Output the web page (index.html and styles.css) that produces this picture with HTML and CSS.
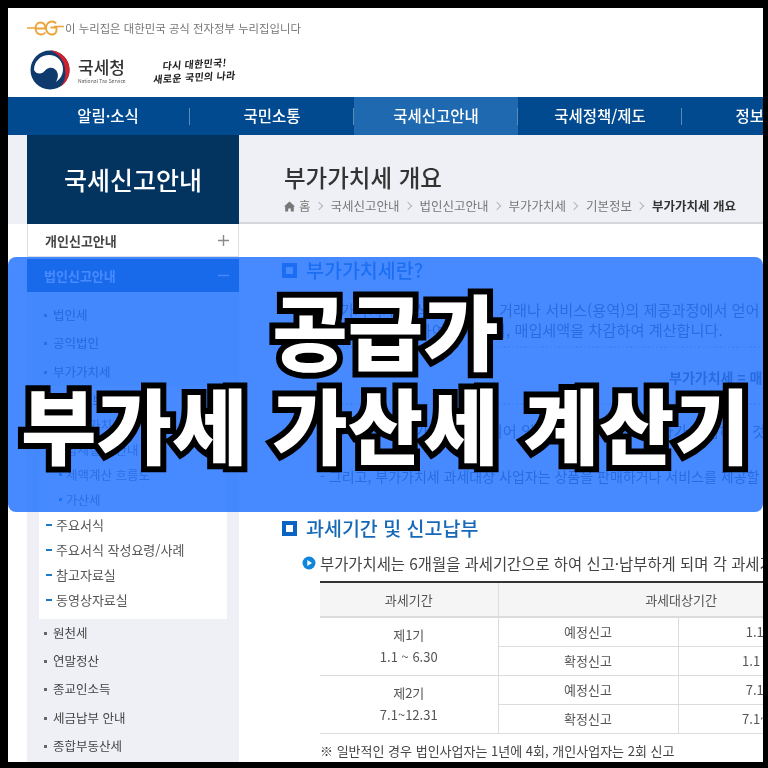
FILE: index.html
```html
<!DOCTYPE html>
<html lang="ko">

<head>
    <meta charset="UTF-8">
    <meta name="viewport" content="width=device-width, initial-scale=1.0">
    <title>공급가 부가세 가산세 계산기</title>
    <link rel="stylesheet" href="styles.css">
</head>

<body>
    <div class="page">
        <header class="site-header">
            <div class="gov-notice">
                <svg class="eg-mark" width="37" height="16" viewBox="0 0 37 16">
                    <path d="M0 8h10M27 6.500h10" stroke="#eba53c" stroke-width="1.600" fill="none" />
                    <path d="M9 8.500h9.500C18.500 5 16.500 2.500 13.500 2.500S8.500 5 8.500 8.500s2.500 6 5.500 6c2 0 3.500-.8 4.500-2" stroke="#eba53c" stroke-width="1.900" fill="none" />
                    <path d="M29 3.500C28 2 26.500 1.500 25 1.500c-3.500 0-6 3-6 6.500s2.500 6.500 6 6.500c2.500 0 4-1.500 4.500-4V7.500h-6" stroke="#eba53c" stroke-width="1.900" fill="none" />
                </svg>
                <span>이 누리집은 대한민국 공식 전자정부 누리집입니다</span>
            </div>
            <div class="brand">
                <svg class="nts-logo" width="40" height="40" viewBox="0 0 40 40">
                    <circle cx="20" cy="20" r="19.500" fill="#0f3a6d" />
                    <path d="M20 .5A19.500 19.500 0 0 1 30 36.800 19 19 0 0 0 35 20C35 10 27 2.500 20 .5Z" fill="#d2202f" />
                    <path d="M4 20C4 11 11 5 19 5c8 0 14 6 14 14 0 6-3 10-7 13 1.500-3 2.500-6 1.500-9-1-4-5-6-8.500-5-3 .8-4 3-6 4.500C10 24 6 24 4 20Z" fill="#fff" />
                </svg>
                <div class="brand-name">
                    <strong>국세청</strong>
                    <small>National Tax Service</small>
                </div>
                <div class="slogan">
                    <span>다시 대한민국!</span>
                    <span>새로운 국민의 나라</span>
                </div>
            </div>
        </header>

        <nav class="main-nav">
            <a class="nav-item">알림·소식</a>
            <a class="nav-item">국민소통</a>
            <a class="nav-item active">국세신고안내</a>
            <a class="nav-item">국세정책/제도</a>
            <a class="nav-item">정보공개</a>
        </nav>

        <div class="main">
            <aside class="sidebar">
                <h2 class="side-title">국세신고안내</h2>
                <div class="side-group">개인신고안내
                    <svg width="11" height="11" viewBox="0 0 11 11"><path d="M5.500 0v11M0 5.500h11" stroke="#8a8a8a" stroke-width="1.400" /></svg>
                </div>
                <div class="side-group open">법인신고안내
                    <svg width="11" height="11" viewBox="0 0 11 11"><path d="M0 5.500h11" stroke="#fff" stroke-width="1.400" /></svg>
                </div>
                <ul class="side-list first">
                    <li>법인세</li>
                    <li>공익법인</li>
                    <li>부가가치세</li>
                </ul>
                <div class="side-sub">
                    <div class="sub-line">기본정보</div>
                    <div class="sub-line deep">부가가치세</div>
                    <div class="sub-line deep">납세절차 안내</div>
                    <div class="sub-line deep">세액계산 흐름도</div>
                    <div class="sub-line deep">가산세</div>
                    <div class="sub-line">주요서식</div>
                    <div class="sub-line">주요서식 작성요령/사례</div>
                    <div class="sub-line">참고자료실</div>
                    <div class="sub-line">동영상자료실</div>
                </div>
                <ul class="side-list">
                    <li>원천세</li>
                    <li>연말정산</li>
                    <li>종교인소득</li>
                    <li>세금납부 안내</li>
                    <li>종합부동산세</li>
                </ul>
            </aside>

            <main class="content">
                <div class="content-head">
                    <h1>부가가치세 개요</h1>
                    <div class="crumbs">
                        <svg width="11" height="11" viewBox="0 0 11 11"><path d="M5.500 .5 11 5.500 9.800 5.500V10.500H6.800V7.500H4.200V10.500H1.200V5.500H0Z" fill="#777" /></svg>
                        <span>홈</span><i></i>
                        <span>국세신고안내</span><i></i>
                        <span>법인신고안내</span><i></i>
                        <span>부가가치세</span><i></i>
                        <span>기본정보</span><i></i>
                        <b>부가가치세 개요</b>
                    </div>
                </div>

                <div class="content-body">
                    <h3 class="sec-title first">부가가치세란?</h3>
                    <p class="lead">- 부가가치세는 상품(재화)의 거래나 서비스(용역)의 제공과정에서 얻어<br>&nbsp;&nbsp;지는 이윤에 대하여 과세하며, 매입세액을 차감하여 계산합니다.</p>
                    <div class="hatch"></div>
                    <div class="formula">부가가치세 = 매출세액 - 매입세액</div>
                    <div class="hatch"></div>
                    <p class="lead note-a">- 부가가치세는 가격에 포함되어 있기 때문에 실제 소비자가 부담하는 것</p>
                    <p class="lead note-b">- 그리고, 부가가치세 과세대상 사업자는 상품을 판매하거나 서비스를 제공할 때</p>

                    <h3 class="sec-title second">과세기간 및 신고납부</h3>
                    <p class="bullet"><svg width="14" height="14" viewBox="0 0 14 14"><circle cx="7" cy="7" r="6.500" fill="#0f86dc" /><path d="M5.300 4v6L10 7Z" fill="#fff" /></svg>부가가치세는 6개월을 과세기간으로 하여 신고·납부하게 되며 각 과세기간을 다시</p>

                    <table class="tax-table">
                        <colgroup>
                            <col class="col-a">
                            <col class="col-b">
                            <col class="col-c">
                        </colgroup>
                        <thead>
                            <tr>
                                <th>과세기간</th>
                                <th colspan="2">과세대상기간</th>
                            </tr>
                        </thead>
                        <tbody>
                            <tr>
                                <td rowspan="2">제1기<br>1.1 ~ 6.30</td>
                                <td>예정신고</td>
                                <td>1.1~3.31</td>
                            </tr>
                            <tr>
                                <td>확정신고</td>
                                <td>1.1 ~ 6.30</td>
                            </tr>
                            <tr>
                                <td rowspan="2">제2기<br>7.1~12.31</td>
                                <td>예정신고</td>
                                <td>7.1~9.30</td>
                            </tr>
                            <tr>
                                <td>확정신고</td>
                                <td>7.1~12.31</td>
                            </tr>
                        </tbody>
                    </table>
                    <p class="table-note">※ 일반적인 경우 법인사업자는 1년에 4회, 개인사업자는 2회 신고</p>
                </div>
            </main>
        </div>

        <div class="banner">
            <div class="banner-title">공급가<br>부가세 가산세 계산기</div>
        </div>
    </div>
</body>

</html>
```

FILE: styles.css
```css
*,
*::before,
*::after {
    box-sizing: border-box;
}

html,
body {
    height: 100%;
}

body {
    margin: 0;
    padding: 8px 5px 6px 8px;
    background: #000;
    font-family: "Noto Sans CJK KR", "Noto Sans", sans-serif;
    color: #444;
    overflow: hidden;
}

.page {
    position: relative;
    width: 755px;
    height: 754px;
    background: #fff;
    overflow: hidden;
    filter: blur(0.35px);
}

/* header */
.site-header {
    height: 89px;
    padding: 12px 0 0 18px;
}

.gov-notice {
    display: flex;
    align-items: center;
    gap: 1px;
    height: 16px;
    font-size: 11.400px;
    color: #777;
}

.eg-mark {
    flex: none;
    margin-left: 1px;
}

.brand {
    display: flex;
    align-items: center;
    margin-top: 14px;
    padding-left: 4px;
}

.brand-name {
    display: flex;
    flex-direction: column;
    margin-left: 8px;
    width: 62px;
}

.brand-name strong {
    font-size: 17px;
    line-height: 21px;
    font-weight: 500;
    color: #333;
}

.brand-name small {
    font-size: 5px;
    line-height: 8px;
    color: #555;
    white-space: nowrap;
}

.slogan {
    display: flex;
    flex-direction: column;
    margin-left: 14px;
    font-size: 10px;
    line-height: 13px;
    font-weight: 700;
    letter-spacing: 0.3px;
    color: #222;
    transform: rotate(-3deg) skewX(-8deg);
}

.slogan span:first-child {
    padding-left: 8px;
}

/* nav */
.main-nav {
    display: flex;
    height: 38px;
    padding-left: 18px;
    background: #014a8f;
}

.nav-item {
    position: relative;
    flex: none;
    width: 164px;
    text-align: center;
    font-size: 15.500px;
    line-height: 37px;
    font-weight: 500;
    color: #fff;
}

.nav-item::after {
    content: "";
    position: absolute;
    right: 0;
    top: 11px;
    height: 17px;
    border-right: 1px solid #5d8bb8;
}

.nav-item.active {
    background: #1f69b0;
}

/* main */
.main {
    display: flex;
    height: 627px;
    padding-left: 19px;
    background: linear-gradient(#eff0f5 89px, #fff 89px);
}

.sidebar {
    flex: none;
    width: 212px;
    background: #eff0f5;
}

.side-title {
    margin: 0;
    height: 89px;
    background: #03335f;
    color: #fff;
    text-align: center;
    font-size: 25px;
    line-height: 88px;
    font-weight: 500;
}

.side-group {
    display: flex;
    justify-content: space-between;
    align-items: center;
    height: 33px;
    padding: 0 9px 0 17px;
    background: #fff;
    border: 1px solid #dedfe4;
    border-top: 0;
    font-size: 13px;
    font-weight: 700;
    color: #444;
}

.side-group.open {
    margin-top: 2px;
    background: #014a8f;
    border: 0;
    color: #fff;
    padding-right: 10px;
}

.side-list {
    margin: 0;
    padding: 0;
    list-style: none;
}

.side-list.first {
    margin-top: 9px;
}

.side-list li {
    position: relative;
    height: 28.300px;
    padding-left: 26px;
    font-size: 12.500px;
    line-height: 28px;
    color: #444;
}

.side-list li::before {
    content: "";
    position: absolute;
    left: 17px;
    top: 13px;
    width: 3px;
    height: 3px;
    background: #666;
}

.side-sub {
    margin: 0 12px;
    padding: 1px 0 0 7px;
    background: #fff;
    height: 233px;
}

.sub-line {
    position: relative;
    height: 25px;
    padding-left: 10px;
    font-size: 13px;
    line-height: 25px;
    color: #555;
}

.sub-line::before {
    content: "";
    position: absolute;
    left: 0;
    top: 12px;
    width: 6px;
    height: 2px;
    background: #1f79c8;
}

.sub-line.deep {
    padding-left: 20px;
    font-size: 12.500px;
    color: #666;
}

.sub-line.deep::before {
    left: 13px;
    top: 11px;
    width: 3px;
    height: 3px;
}

/* content */
.content {
    flex: 1;
    min-width: 0;
}

.content-head {
    height: 89px;
    padding: 26px 0 0 45px;
    border-bottom: 2px solid #d5d6dc;
}

.content-head h1 {
    margin: 0;
    font-size: 23.500px;
    line-height: 32px;
    font-weight: 500;
    color: #333;
}

.crumbs {
    display: flex;
    align-items: center;
    gap: 4px;
    margin-top: 4px;
    font-size: 12.500px;
    line-height: 18px;
    color: #777;
    white-space: nowrap;
}

.crumbs b {
    color: #333;
}

.crumbs i {
    width: 6px;
    height: 6px;
    margin: 0 5px 0 1px;
    border-top: 1px solid #b5b5b5;
    border-right: 1px solid #b5b5b5;
    transform: rotate(45deg);
}

.content-body {
    padding-left: 45px;
    white-space: nowrap;
}

.sec-title {
    position: relative;
    margin: 0;
    padding-left: 22px;
    font-size: 19.500px;
    line-height: 24px;
    font-weight: 500;
    color: #1569b8;
}

.sec-title::before {
    content: "";
    position: absolute;
    left: -2px;
    top: 5px;
    width: 15px;
    height: 15px;
    border: 4px solid #0b63c4;
    background: #fff;
}

.sec-title.first {
    margin-top: 34px;
}

.sec-title.second {
    margin-top: 30px;
}

.lead {
    margin: 17px 0 0 33px;
    font-size: 15.200px;
    line-height: 20px;
    color: #555;
}

.hatch {
    height: 2px;
    margin-top: 7px;
    background: repeating-linear-gradient(135deg, #c9c9c9 0 1px, #fff 1px 3px);
}

.formula {
    margin-top: 19px;
    padding-left: 385px;
    font-size: 14px;
    line-height: 20px;
    font-weight: 700;
    color: #555;
}

.formula + .hatch {
    margin-top: 16px;
}

.note-a {
    margin-top: 15px;
}

.note-b {
    margin: 26px 0 0 36px;
    font-size: 14px;
}

.bullet {
    display: flex;
    align-items: center;
    gap: 4px;
    margin: 13px 0 0 18px;
    font-size: 15.400px;
    line-height: 20px;
    color: #444;
}

.bullet svg {
    flex: none;
}

.tax-table {
    width: 544px;
    margin: 8px 0 0 36px;
    border-collapse: collapse;
    table-layout: fixed;
    border-top: 2px solid #333;
    font-size: 13px;
    color: #555;
}

.col-a {
    width: 178px;
}

.col-b {
    width: 180px;
}

.col-c {
    width: 186px;
}

.tax-table th,
.tax-table td {
    padding: 0;
    text-align: center;
    border: 1px solid #dcdcdc;
    border-left-width: 0;
    font-weight: 400;
    height: 29px;
    line-height: 22px;
}

.tax-table th {
    height: 35px;
    background: #f5f5f5;
    border-bottom: 2px solid #dcdcdc;
}

.table-note {
    margin: 7px 0 0 36px;
    font-size: 13px;
    line-height: 20px;
    color: #444;
}

/* title banner over the page */
.banner {
    position: absolute;
    left: 0;
    right: 0;
    top: 249px;
    height: 255px;
    padding-bottom: 18px;
    border-radius: 8px;
    background: rgba(30, 112, 255, 0.82);
    display: flex;
    align-items: center;
    justify-content: center;
}

.banner-title {
    text-align: center;
    white-space: nowrap;
    font-size: 82px;
    line-height: 94px;
    font-weight: 900;
    word-spacing: 2px;
    color: #fff;
    -webkit-text-stroke: 12px #000;
    paint-order: stroke fill;
}
```
